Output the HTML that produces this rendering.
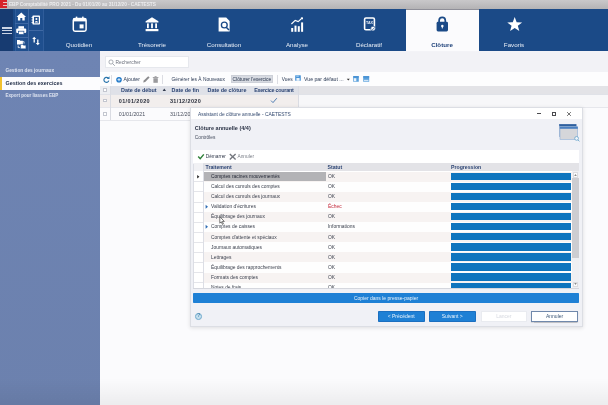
<!DOCTYPE html>
<html><head><meta charset="utf-8">
<style>
*{box-sizing:border-box;margin:0;padding:0}
html,body{width:608px;height:405px;overflow:hidden;background:#f3f3f7;font-family:"Liberation Sans",sans-serif;}
.a{position:absolute}
.t{position:absolute;white-space:nowrap;line-height:1;}
#title{left:0;top:0;width:608px;height:9.2px;background:linear-gradient(#c9c8ca,#b4b3b5)}
#ribbon{left:0;top:9px;width:608px;height:42.2px;background:#1b4a87}
#sidebar{left:0;top:51.2px;width:100px;height:354px;background:linear-gradient(#6e84b3,#6c81ae)}
.tab{position:absolute;top:41.8px;font-size:6.2px;color:#e8eef7;transform:translateX(-50%);white-space:nowrap;line-height:1}
.sb{position:absolute;left:5px;font-size:5.4px;font-weight:bold;color:#dde3f0;white-space:nowrap;line-height:1}
.cb{width:3.8px;height:3.8px;border:0.5px solid #c3c6cf;background:#fff}
.gh{font-size:5.4px;font-weight:bold;color:#2c4473}
#wrap{position:absolute;left:0;top:0;width:608px;height:405px;overflow:hidden;will-change:transform;filter:blur(0.5px);}
</style></head><body><div id="wrap">
<!-- title bar -->
<div id="title" class="a"></div>
<div class="a" style="left:0.3px;top:0;width:6.3px;height:7.8px;background:#d6222a"></div>
<div class="a" style="left:3px;top:1.6px;width:3.6px;height:1.4px;background:#e9bfc1"></div>
<div class="a" style="left:3px;top:4.5px;width:3.6px;height:1.4px;background:#e9bfc1"></div>
<div class="t" style="left:9px;top:3.2px;font-size:4.75px;color:#ececee;font-weight:bold;letter-spacing:-0.05px">EBP Comptabilité PRO 2021 - Du 01/01/20 au 31/12/20 - CAETESTS</div>

<!-- ribbon -->
<div id="ribbon" class="a"></div>
<div class="a" style="left:0;top:9px;width:13px;height:42.2px;background:#173b71"></div>
<div class="a" style="left:15px;top:9.4px;width:28.3px;height:41.8px;background:#1f4f8e"></div>
<div class="a" style="left:28.3px;top:9.4px;width:0.7px;height:41.8px;background:#3f69a4"></div>
<div class="a" style="left:43.2px;top:9.4px;width:0.7px;height:41.8px;background:#2f5c9a"></div>
<div class="a" style="left:14.6px;top:9.4px;width:0.7px;height:41.8px;background:#2f5c9a"></div>
<div class="a" style="left:15px;top:23.2px;width:13.4px;height:0.7px;background:#3f69a4"></div>
<div class="a" style="left:15px;top:37px;width:13.4px;height:0.7px;background:#3f69a4"></div>
<div class="a" style="left:29px;top:30px;width:14.4px;height:0.7px;background:#3f69a4"></div>
<!-- hamburger -->
<div class="a" style="left:2px;top:27.4px;width:9.5px;height:1.2px;background:#ccd5e5"></div>
<div class="a" style="left:2px;top:30.3px;width:9.5px;height:1.2px;background:#ccd5e5"></div>
<div class="a" style="left:2px;top:33.2px;width:9.5px;height:1.2px;background:#ccd5e5"></div>
<svg class="a" style="left:0;top:0" width="608" height="60" viewBox="0 0 608 60">
<!-- home -->
<path d="M21.3 12.4 L16.5 16.9 H17.9 V20.5 H20.3 V17.9 H22.3 V20.5 H24.7 V16.9 H26.1 Z" fill="#fff"/>
<!-- printer -->
<rect x="18.4" y="26.2" width="5.6" height="2.6" fill="#fff"/>
<rect x="16.2" y="28.4" width="10" height="4.6" rx="1.1" fill="#fff"/>
<rect x="18.5" y="31.2" width="5.4" height="3.4" fill="#fff" stroke="#1f4f8e" stroke-width="0.7"/>
<!-- folders -->
<path d="M17 40 h2.6 l0.7 0.8 h2.6 v3.8 h-5.9z" fill="#fff"/>
<path d="M20.6 44.4 h2.2 l0.7 0.8 h2.4 v3.6 h-5.3z" fill="#fff" stroke="#1f4f8e" stroke-width="0.5"/>
<path d="M18.2 45.6 v2 h1.6" fill="none" stroke="#fff" stroke-width="0.8"/>
<path d="M24 43.6 v-2 h-0.8" fill="none" stroke="#fff" stroke-width="0.8"/>
<!-- book -->
<rect x="32.4" y="15.6" width="7.6" height="9" rx="0.8" fill="#fff"/>
<rect x="34" y="16.9" width="4.8" height="6.4" fill="#1f4f8e"/>
<circle cx="36.4" cy="19" r="1.05" fill="#fff"/>
<path d="M34.6 22.5 q1.8 -2.8 3.6 0z" fill="#fff"/>
<rect x="31.5" y="17.2" width="1.5" height="0.8" fill="#fff"/><rect x="31.5" y="19.6" width="1.5" height="0.8" fill="#fff"/><rect x="31.5" y="22" width="1.5" height="0.8" fill="#fff"/>
<!-- arrows -->
<path d="M34.2 36.8 l-2 2.3 h1.35 v3.4 h1.3 v-3.4 h1.35z" fill="#fff"/>
<path d="M37.8 45.2 l-2 -2.3 h1.35 v-3.4 h1.3 v3.4 h1.35z" fill="#fff"/>
</svg>

<!-- sidebar -->
<div id="sidebar" class="a"></div>
<div class="sb" style="left:5.5px;top:69.3px;font-size:4.75px">Gestion des journaux</div>
<div class="a" style="left:0;top:77px;width:100px;height:13px;background:#fcfcfe"></div>
<div class="a" style="left:0;top:77px;width:1.6px;height:13px;background:#f2c12e"></div>
<div class="sb" style="left:5.5px;top:80.5px;color:#1d2a44">Gestion des exercices</div>
<div class="sb" style="left:5.5px;top:94px;font-size:4.55px">Export pour liasses EBP</div>

<!-- main area -->
<div class="a" style="left:100px;top:51.5px;width:508px;height:354px;background:#f2f2f6"></div>
<div class="a" style="left:100px;top:120px;width:508px;height:285px;background:#fbfbfd"></div>
<div class="a" style="left:100px;top:72.2px;width:508px;height:14px;background:#fdfdfe"></div>
<div class="a" style="left:100px;top:85.5px;width:508px;height:8.5px;background:#e3e3e7"></div>
<div class="a" style="left:100px;top:94px;width:508px;height:12.6px;background:#f7f7f9"></div>
<div class="a" style="left:0;top:378px;width:608px;height:27px;background:linear-gradient(rgba(0,0,0,0),rgba(0,0,0,0.06))"></div>
<!-- search -->
<div class="a" style="left:105.4px;top:56.2px;width:83.8px;height:11.6px;background:#fff;border:0.6px solid #e6e8ed"></div>
<svg class="a" style="left:108px;top:58.8px" width="8" height="8" viewBox="0 0 8 8"><circle cx="3" cy="3" r="2.1" fill="none" stroke="#8a8f9a" stroke-width="0.7"/><path d="M4.6 4.6 L6.8 6.8" stroke="#8a8f9a" stroke-width="0.8"/></svg>
<div class="t" style="left:115.6px;top:60.9px;font-size:4.85px;color:#6c717d">Rechercher</div>
<!-- toolbar -->
<div class="a" style="left:0;top:0.7px;width:608px;height:0">
<svg class="a" style="left:102px;top:74px" width="60" height="10" viewBox="0 0 60 10">
<path d="M6.3 3.2 A2.5 2.5 0 1 0 6.8 5.6" fill="none" stroke="#2a76ad" stroke-width="1.15"/><path d="M7.5 1.3 v2.7 h-2.7z" fill="#2a76ad"/>
<circle cx="17" cy="4.7" r="2.8" fill="#1f78c8"/><path d="M15.4 4.7 h3.2 M17 3.1 v3.2" stroke="#fff" stroke-width="0.8"/>
<path d="M41.2 7.6 l0.6 -2 l4.4 -4.4 l1.4 1.4 l-4.4 4.4z" fill="#8b8b8e"/>
<rect x="51.4" y="3.2" width="4.4" height="4.6" fill="#9a9a9d"/><rect x="50.8" y="2" width="5.6" height="0.9" fill="#9a9a9d"/><rect x="52.6" y="1.2" width="2" height="0.9" fill="#9a9a9d"/>
</svg>
<div class="a" style="left:111.3px;top:74.5px;width:0.6px;height:8.5px;background:#dcdde3"></div>
<div class="t" style="left:123.5px;top:76.2px;font-size:5.2px;color:#2b3a55">Ajouter</div>
<div class="a" style="left:162.3px;top:74.5px;width:0.6px;height:8.5px;background:#dcdde3"></div>
<div class="t" style="left:171.6px;top:76.9px;font-size:4.87px;color:#2b3a55">Générer les À Nouveaux</div>
<div class="a" style="left:230.8px;top:74.2px;width:42px;height:8px;background:#d8dbe2;border:0.5px solid #cdd0d8"></div>
<div class="t" style="left:232.6px;top:76.9px;font-size:4.85px;color:#1f2c44">Clôturer l'exercice</div>
<div class="a" style="left:277.3px;top:74.5px;width:0.6px;height:8.5px;background:#dcdde3"></div>
<div class="t" style="left:281.8px;top:76.9px;font-size:4.85px;color:#2b3a55">Vues</div>
<svg class="a" style="left:295.2px;top:74.8px" width="6" height="6" viewBox="0 0 6 6"><rect x="0.2" y="0.2" width="5.6" height="5.6" rx="0.5" fill="#4a93d6"/><rect x="1.2" y="0.2" width="2.6" height="1.8" fill="#8ec0ea"/><rect x="1.4" y="3" width="3.2" height="2.8" fill="#eaf3fb"/></svg>
<div class="t" style="left:304px;top:76.2px;font-size:5.2px;color:#2b3a55">Vue par défaut ...</div>
<svg class="a" style="left:346px;top:77px" width="5" height="4" viewBox="0 0 5 4"><path d="M0.8 0.8 h3 l-1.5 1.8z" fill="#333"/></svg>
<svg class="a" style="left:353.2px;top:75.2px" width="6" height="6" viewBox="0 0 6 6"><rect x="0.2" y="0.2" width="5.6" height="5.6" rx="0.4" fill="#5aa0dc"/><rect x="0.2" y="0.2" width="5.6" height="1.3" fill="#3f8bd0"/><rect x="0.9" y="2.2" width="2.4" height="3" fill="#eaf3fb"/></svg>
<svg class="a" style="left:363.3px;top:75.2px" width="6.4" height="6" viewBox="0 0 6.4 6"><rect x="0.2" y="0.2" width="6" height="5.6" rx="0.4" fill="#5aa0dc"/><rect x="0.2" y="0.2" width="6" height="1.3" fill="#3f8bd0"/><rect x="0.9" y="3.8" width="4.6" height="1.4" fill="#cfe4f6"/></svg>
</div>
<!-- grid -->
<div class="a" style="left:100px;top:85.5px;width:197.5px;height:8.5px;background:#dfe1e8"></div>
<div class="a" style="left:100px;top:94px;width:197.5px;height:12.6px;background:#f2eeed"></div>
<div class="a" style="left:100px;top:106.6px;width:508px;height:13.4px;background:#fbfbfd"></div>
<div class="a" style="left:100px;top:94.2px;width:508px;height:0.5px;background:#e0e2e8"></div>
<div class="a" style="left:100px;top:106.5px;width:508px;height:0.5px;background:#e6e7ec"></div>
<div class="a" style="left:100px;top:120px;width:90px;height:0.5px;background:#e6e7ec"></div>
<div class="a" style="left:109.5px;top:86px;width:0.6px;height:34px;background:#dadce3"></div>
<div class="a" style="left:297.5px;top:86px;width:0.6px;height:20.5px;background:#dadce3"></div>
<div class="a" style="left:100px;top:85.5px;width:9.5px;height:8.5px;background:#eceef2"></div>
<div class="a cb" style="left:103px;top:88.1px"></div>
<div class="a cb" style="left:103px;top:98.6px"></div>
<div class="a cb" style="left:103px;top:112.3px"></div>
<div class="t gh" style="left:121px;top:87.7px">Date de début</div>
<svg class="a" style="left:162px;top:88px" width="5" height="4" viewBox="0 0 5 4"><path d="M0.6 3 h3.4 l-1.7 -2.4z" fill="#333c50"/></svg>
<div class="t gh" style="left:171.5px;top:87.7px">Date de fin</div>
<div class="t gh" style="left:207.5px;top:87.7px">Date de clôture</div>
<div class="t gh" style="left:254.2px;top:87.7px;letter-spacing:-0.26px">Exercice courant</div>
<div class="t" style="left:118.7px;top:98.7px;font-size:5.5px;font-weight:bold;color:#2a2f3c;letter-spacing:0.38px">01/01/2020</div>
<div class="t" style="left:169.9px;top:98.7px;font-size:5.5px;font-weight:bold;color:#2a2f3c;letter-spacing:0.38px">31/12/2020</div>
<svg class="a" style="left:270px;top:97px" width="8" height="7" viewBox="0 0 8 7"><path d="M1 3.6 l2 2 l3.8 -4.4" fill="none" stroke="#3f72ad" stroke-width="0.9"/></svg>
<div class="t" style="left:118.7px;top:111.7px;font-size:5.3px;color:#4b5160">01/01/2021</div>
<div class="t" style="left:169.9px;top:111.7px;font-size:5.3px;color:#4b5160">31/12/20</div>

<!-- tabs -->
<div class="a" style="left:405.8px;top:9px;width:73.2px;height:42.4px;background:#fbfbfd;border-top:1.4px solid #8f8f98"></div>
<div class="tab" style="left:79px">Quotidien</div>
<div class="tab" style="left:152px">Trésorerie</div>
<div class="tab" style="left:224px">Consultation</div>
<div class="tab" style="left:297px">Analyse</div>
<div class="tab" style="left:369px">Déclaratif</div>
<div class="tab" style="left:442px;color:#1b3f78;font-weight:bold">Clôture</div>
<div class="tab" style="left:514px">Favoris</div>
<svg class="a" style="left:0;top:0.7px" width="608" height="60" viewBox="0 0 608 60">
<!-- calendar -->
<rect x="73.3" y="17.6" width="12.8" height="12.6" rx="1.7" fill="none" stroke="#fff" stroke-width="1.5"/>
<rect x="73.3" y="17.6" width="12.8" height="2.8" fill="#fff"/>
<rect x="75.8" y="15.6" width="1.5" height="2.8" fill="#fff"/><rect x="82.1" y="15.6" width="1.5" height="2.8" fill="#fff"/>
<rect x="79.6" y="23.4" width="4" height="4" fill="#fff"/>
<!-- bank -->
<path d="M152 16.2 L158.4 20.2 V21.4 H145.6 V20.2 Z" fill="#fff"/>
<rect x="147" y="22.4" width="1.8" height="4.8" fill="#fff"/><rect x="151.1" y="22.4" width="1.8" height="4.8" fill="#fff"/><rect x="155.2" y="22.4" width="1.8" height="4.8" fill="#fff"/>
<rect x="145.6" y="28" width="12.8" height="2.2" fill="#fff"/>
<!-- consultation -->
<path d="M218.6 16.6 h7.6 l3.4 3.4 v10.6 h-11z" fill="#fff"/>
<circle cx="224.3" cy="24" r="2.9" fill="#fff" stroke="#1b4a87" stroke-width="1.35"/>
<path d="M226.2 26.2 l2.8 2.8" stroke="#1b4a87" stroke-width="1.5"/>
<!-- analyse -->
<rect x="291.2" y="27" width="2" height="3.8" fill="#fff"/><rect x="294.5" y="24.6" width="2" height="6.2" fill="#fff"/><rect x="297.8" y="25.2" width="2" height="5.6" fill="#fff"/><rect x="301.1" y="21.4" width="2" height="9.4" fill="#fff"/>
<path d="M291.4 23 l3.8 -3.6 l3 1.2 l4.2 -3.8" fill="none" stroke="#fff" stroke-width="1.2"/>
<path d="M300.6 16.4 h2.4 v2.4z" fill="#fff"/>
<!-- declaratif -->
<rect x="364.6" y="17" width="9.8" height="11.8" rx="1.3" fill="none" stroke="#fff" stroke-width="1.6"/>
<text x="366.1" y="23.3" font-family="Liberation Sans" font-size="3.7" font-weight="bold" fill="#e8eef7" letter-spacing="-0.1">TAX</text>
<circle cx="373" cy="27.6" r="2.4" fill="#fff" stroke="#1b4a87" stroke-width="0.7"/>
<path d="M371.8 27.7 l0.9 0.9 l1.6 -1.8" stroke="#1b4a87" stroke-width="0.7" fill="none"/>
<!-- lock -->
<path d="M439.1 22 v-2.6 a3.1 3.1 0 0 1 6.2 0 v2.6" fill="none" stroke="#1b4a87" stroke-width="1.7"/>
<rect x="436.6" y="20.8" width="11.4" height="9.6" rx="1.4" fill="#1b4a87"/>
<circle cx="442.3" cy="25" r="1.25" fill="#fbfbfd"/><rect x="441.8" y="25" width="1" height="2.4" fill="#fbfbfd"/>
<!-- star -->
<path d="M514.70 16.00 L516.64 21.13 L522.12 21.39 L517.84 24.82 L519.28 30.11 L514.70 27.10 L510.12 30.11 L511.56 24.82 L507.28 21.39 L512.76 21.13Z" fill="#fff"/>
</svg>

<!-- dialog -->
<div class="a" style="left:189.9px;top:107px;width:393.1px;height:220.2px;background:#f0f1f6;border:0.6px solid #dcdee4;box-shadow:0 1px 4px rgba(0,0,0,0.12)"></div>
<div class="a" style="left:190.5px;top:107.6px;width:391.9px;height:11.8px;background:#fff"></div>
<div class="a" style="left:193.3px;top:149.9px;width:386.2px;height:138.8px;background:#fff"></div>
<div class="t" style="left:198px;top:112.9px;font-size:4.9px;color:#344a70">Assistant de clôture annuelle - CAETESTS</div>
<div class="a" style="left:537px;top:113.1px;width:4.2px;height:0.9px;background:#4a4a4e"></div>
<div class="a" style="left:551.7px;top:111.6px;width:4.2px;height:4px;border:0.6px solid #4a4a4e;border-top-width:0.9px"></div>
<svg class="a" style="left:565.8px;top:110.6px" width="6" height="6" viewBox="0 0 6 6"><path d="M1.1 1.1 L4.9 4.9 M4.9 1.1 L1.1 4.9" stroke="#444" stroke-width="0.75"/></svg>
<div class="t" style="left:194.8px;top:125.9px;font-size:5.5px;font-weight:bold;color:#2b3346">Clôture annuelle (4/4)</div>
<div class="t" style="left:194.8px;top:135.9px;font-size:4.8px;color:#444c5d">Contrôles</div>
<svg class="a" style="left:558px;top:123px" width="24" height="22" viewBox="0 0 24 22">
<rect x="1.5" y="1.4" width="16.6" height="12" fill="#c9ccd2" stroke="#6f93c4" stroke-width="0.5"/>
<rect x="1.3" y="1.2" width="17" height="2" fill="#2e5f9e"/>
<rect x="2" y="3.8" width="17.6" height="12.6" fill="#d5d6da" stroke="#8fb0d8" stroke-width="0.6"/>
<rect x="1.8" y="3.6" width="18" height="2.2" fill="#4a7fc0"/>
<circle cx="18.6" cy="15.4" r="1.9" fill="#eef4fa" stroke="#6aa5cc" stroke-width="0.8"/><path d="M20 16.9 l1.4 1.5" stroke="#6aa5cc" stroke-width="0.9"/>
</svg>
<svg class="a" style="left:196px;top:153px" width="44" height="8" viewBox="0 0 44 8"><path d="M2.2 3.6 l2 2.1 l3.6 -4.3" fill="none" stroke="#2f8038" stroke-width="1.45"/><path d="M33.8 0.9 l5.8 5.6 M39.6 0.9 l-5.8 5.6" stroke="#74777e" stroke-width="1.35"/></svg>
<div class="t" style="left:205.8px;top:155.1px;font-size:4.75px;color:#333b4c">Démarrer</div>
<div class="t" style="left:237.5px;top:155.1px;font-size:4.8px;color:#7b7f88">Annuler</div>
<!-- dialog grid -->
<div class="a" style="left:193.3px;top:163.1px;width:386.2px;height:8px;background:#e3e3e7"></div>
<div class="a" style="left:193.3px;top:163.1px;width:10px;height:8px;background:#f1f1f4"></div>
<div class="t gh" style="left:205.5px;top:165.3px;font-size:5.2px">Traitement</div>
<div class="t gh" style="left:327.5px;top:165.3px;font-size:5.2px">Statut</div>
<div class="t gh" style="left:451px;top:165.3px;font-size:5.2px">Progression</div>
<div class="a" style="left:193px;top:171.4px;width:386px;height:116.6px;overflow:hidden">
<div class="a" style="left:10.4px;top:0.45px;width:369px;height:10.07px;background:#f7f3f2"></div>
<div class="a" style="left:0;top:10.02px;width:10.4px;height:0.6px;background:#e4e5ea"></div>
<div class="a" style="left:10.4px;top:0.45px;width:122.4px;height:9.67px;background:#b3b3b6"></div>
<div class="a" style="left:257.5px;top:1.20px;width:120.5px;height:7.6px;background:#0f75be"></div>
<div class="t" style="left:18px;top:3.55px;font-size:4.9px;color:#1e2230">Comptes racines mouvementés</div>
<div class="t" style="left:135px;top:3.55px;font-size:4.9px;color:#3a3f4c">OK</div>
<div class="a" style="left:10.4px;top:10.52px;width:369px;height:10.07px;background:#fefefe"></div>
<div class="a" style="left:0;top:20.09px;width:10.4px;height:0.6px;background:#e4e5ea"></div>
<div class="a" style="left:257.5px;top:11.25px;width:120.5px;height:7.6px;background:#0f75be"></div>
<div class="t" style="left:18px;top:13.65px;font-size:4.9px;color:#3a3f4c">Calcul des cumuls des comptes</div>
<div class="t" style="left:135px;top:13.65px;font-size:4.9px;color:#3a3f4c">OK</div>
<div class="a" style="left:10.4px;top:20.59px;width:369px;height:10.07px;background:#f7f3f2"></div>
<div class="a" style="left:0;top:30.16px;width:10.4px;height:0.6px;background:#e4e5ea"></div>
<div class="a" style="left:257.5px;top:21.30px;width:120.5px;height:7.6px;background:#0f75be"></div>
<div class="t" style="left:18px;top:23.75px;font-size:4.9px;color:#3a3f4c">Calcul des cumuls des journaux</div>
<div class="t" style="left:135px;top:23.75px;font-size:4.9px;color:#3a3f4c">OK</div>
<div class="a" style="left:10.4px;top:30.66px;width:369px;height:10.07px;background:#fefefe"></div>
<div class="a" style="left:0;top:40.23px;width:10.4px;height:0.6px;background:#e4e5ea"></div>
<div class="a" style="left:257.5px;top:31.35px;width:120.5px;height:7.6px;background:#0f75be"></div>
<div class="t" style="left:18px;top:33.85px;font-size:4.9px;color:#3a3f4c">Validation d'écritures</div>
<div class="t" style="left:135px;top:33.85px;font-size:4.9px;color:#c4283a">Échec</div>
<div class="a" style="left:10.4px;top:40.73px;width:369px;height:10.07px;background:#f7f3f2"></div>
<div class="a" style="left:0;top:50.30px;width:10.4px;height:0.6px;background:#e4e5ea"></div>
<div class="a" style="left:257.5px;top:41.40px;width:120.5px;height:7.6px;background:#0f75be"></div>
<div class="t" style="left:18px;top:43.95px;font-size:4.9px;color:#3a3f4c">Équilibrage des journaux</div>
<div class="t" style="left:135px;top:43.95px;font-size:4.9px;color:#3a3f4c">OK</div>
<div class="a" style="left:10.4px;top:50.80px;width:369px;height:10.07px;background:#fefefe"></div>
<div class="a" style="left:0;top:60.37px;width:10.4px;height:0.6px;background:#e4e5ea"></div>
<div class="a" style="left:257.5px;top:51.45px;width:120.5px;height:7.6px;background:#0f75be"></div>
<div class="t" style="left:18px;top:54.05px;font-size:4.9px;color:#3a3f4c">Comptes de caisses</div>
<div class="t" style="left:135px;top:54.05px;font-size:4.9px;color:#3a3f4c">Informations</div>
<div class="a" style="left:10.4px;top:60.87px;width:369px;height:10.07px;background:#f7f3f2"></div>
<div class="a" style="left:0;top:70.44px;width:10.4px;height:0.6px;background:#e4e5ea"></div>
<div class="a" style="left:257.5px;top:61.50px;width:120.5px;height:7.6px;background:#0f75be"></div>
<div class="t" style="left:18px;top:64.15px;font-size:4.9px;color:#3a3f4c">Comptes d'attente et spéciaux</div>
<div class="t" style="left:135px;top:64.15px;font-size:4.9px;color:#3a3f4c">OK</div>
<div class="a" style="left:10.4px;top:70.94px;width:369px;height:10.07px;background:#fefefe"></div>
<div class="a" style="left:0;top:80.51px;width:10.4px;height:0.6px;background:#e4e5ea"></div>
<div class="a" style="left:257.5px;top:71.55px;width:120.5px;height:7.6px;background:#0f75be"></div>
<div class="t" style="left:18px;top:74.25px;font-size:4.9px;color:#3a3f4c">Journaux automatiques</div>
<div class="t" style="left:135px;top:74.25px;font-size:4.9px;color:#3a3f4c">OK</div>
<div class="a" style="left:10.4px;top:81.01px;width:369px;height:10.07px;background:#f7f3f2"></div>
<div class="a" style="left:0;top:90.58px;width:10.4px;height:0.6px;background:#e4e5ea"></div>
<div class="a" style="left:257.5px;top:81.60px;width:120.5px;height:7.6px;background:#0f75be"></div>
<div class="t" style="left:18px;top:84.35px;font-size:4.9px;color:#3a3f4c">Lettrages</div>
<div class="t" style="left:135px;top:84.35px;font-size:4.9px;color:#3a3f4c">OK</div>
<div class="a" style="left:10.4px;top:91.08px;width:369px;height:10.07px;background:#fefefe"></div>
<div class="a" style="left:0;top:100.65px;width:10.4px;height:0.6px;background:#e4e5ea"></div>
<div class="a" style="left:257.5px;top:91.65px;width:120.5px;height:7.6px;background:#0f75be"></div>
<div class="t" style="left:18px;top:94.45px;font-size:4.9px;color:#3a3f4c">Équilibrage des rapprochements</div>
<div class="t" style="left:135px;top:94.45px;font-size:4.9px;color:#3a3f4c">OK</div>
<div class="a" style="left:10.4px;top:101.15px;width:369px;height:10.07px;background:#f7f3f2"></div>
<div class="a" style="left:0;top:110.72px;width:10.4px;height:0.6px;background:#e4e5ea"></div>
<div class="a" style="left:257.5px;top:101.70px;width:120.5px;height:7.6px;background:#0f75be"></div>
<div class="t" style="left:18px;top:104.55px;font-size:4.9px;color:#3a3f4c">Formats des comptes</div>
<div class="t" style="left:135px;top:104.55px;font-size:4.9px;color:#3a3f4c">OK</div>
<div class="a" style="left:10.4px;top:111.22px;width:369px;height:10.07px;background:#fefefe"></div>
<div class="a" style="left:0;top:120.79px;width:10.4px;height:0.6px;background:#e4e5ea"></div>
<div class="a" style="left:257.5px;top:111.75px;width:120.5px;height:7.6px;background:#0f75be"></div>
<div class="t" style="left:18px;top:114.65px;font-size:4.9px;color:#3a3f4c">Notes de frais</div>
<div class="t" style="left:135px;top:114.65px;font-size:4.9px;color:#3a3f4c">OK</div>
</div>
<div class="a" style="left:193px;top:163.7px;width:0.6px;height:124.3px;background:#dcdee5"></div>
<div class="a" style="left:203.2px;top:163.7px;width:0.6px;height:124.3px;background:#dcdee5"></div>
<div class="a" style="left:193px;top:288px;width:386px;height:0.6px;background:#d5d7de"></div>
<svg class="a" style="left:196px;top:174px" width="5" height="6" viewBox="0 0 5 6"><path d="M1.2 1 l2.2 1.8 l-2.2 1.8z" fill="#222"/></svg>
<svg class="a" style="left:205px;top:204.2px" width="4" height="6" viewBox="0 0 4 6"><path d="M0.6 0.8 l2.4 2 l-2.4 2z" fill="#2e6db5"/></svg>
<svg class="a" style="left:205px;top:224.4px" width="4" height="6" viewBox="0 0 4 6"><path d="M0.6 0.8 l2.4 2 l-2.4 2z" fill="#2e6db5"/></svg>
<svg class="a" style="left:218.6px;top:215.6px" width="7" height="10" viewBox="0 0 7 10"><path d="M0.8 0.6 v6.6 l1.5 -1.4 l1.1 2.6 l1 -0.45 l-1.1 -2.5 h2z" fill="#fff" stroke="#222" stroke-width="0.6"/></svg>
<!-- scrollbar -->
<div class="a" style="left:572px;top:171.2px;width:7px;height:116.8px;background:#efeff2"></div>
<div class="a" style="left:572.4px;top:178px;width:6.2px;height:80px;background:#cdcdd1"></div>
<div class="a" style="left:572.6px;top:172.4px;width:5.8px;height:5.4px;background:#fafafb;border:0.4px solid #dcdce0"></div>
<div class="a" style="left:572.6px;top:281.6px;width:5.8px;height:5.6px;background:#fafafb;border:0.4px solid #dcdce0"></div>
<svg class="a" style="left:572px;top:172px" width="7" height="6" viewBox="0 0 7 6"><path d="M2.2 3.8 l1.3 -1.6 l1.3 1.6z" fill="#666"/></svg>
<svg class="a" style="left:572px;top:281px" width="7" height="6" viewBox="0 0 7 6"><path d="M2.2 2.2 l1.3 1.6 l1.3 -1.6z" fill="#666"/></svg>
<!-- copy button -->
<div class="a" style="left:193.2px;top:292.6px;width:385.9px;height:10.4px;background:#1e80d5;border-radius:0.8px"></div>
<div class="t" style="left:386px;top:295.5px;font-size:5px;color:#eaf3fb;transform:translateX(-50%)">Copier dans le presse-papier</div>
<!-- help -->
<div class="a" style="left:195.3px;top:312.9px;width:6.8px;height:6.8px;border:0.9px solid #6fa9cc;background:#c4dfee;border-radius:50%"></div>
<div class="t" style="left:197.3px;top:314.4px;font-size:4.8px;font-weight:bold;color:#4a86ae">?</div>
<!-- buttons -->
<div class="a" style="left:378px;top:311.3px;width:46.6px;height:10.4px;background:#1e80d5;border-radius:0.9px;border:0.5px solid #1b6fc0"></div>
<div class="t" style="left:401.2px;top:314.4px;font-size:5px;color:#eaf3fb;transform:translateX(-50%)">&lt; Précédent</div>
<div class="a" style="left:429px;top:311.3px;width:46.6px;height:10.4px;background:#1e80d5;border-radius:0.9px;border:0.5px solid #1b6fc0"></div>
<div class="t" style="left:452.2px;top:314.4px;font-size:5px;color:#eaf3fb;transform:translateX(-50%)">Suivant &gt;</div>
<div class="a" style="left:480.6px;top:311.3px;width:46.5px;height:10.4px;background:#fff;border:0.6px solid #e9ebf0"></div>
<div class="t" style="left:503.8px;top:314.4px;font-size:5px;color:#d5d8df;transform:translateX(-50%)">Lancer</div>
<div class="a" style="left:531.2px;top:311.3px;width:46.8px;height:10.4px;background:#fff;border:0.7px solid #7088ab;box-shadow:0 0.5px 1px rgba(0,0,0,0.2)"></div>
<div class="t" style="left:554.6px;top:314.4px;font-size:5px;color:#3d5878;transform:translateX(-50%)">Annuler</div>
</div></body></html>
